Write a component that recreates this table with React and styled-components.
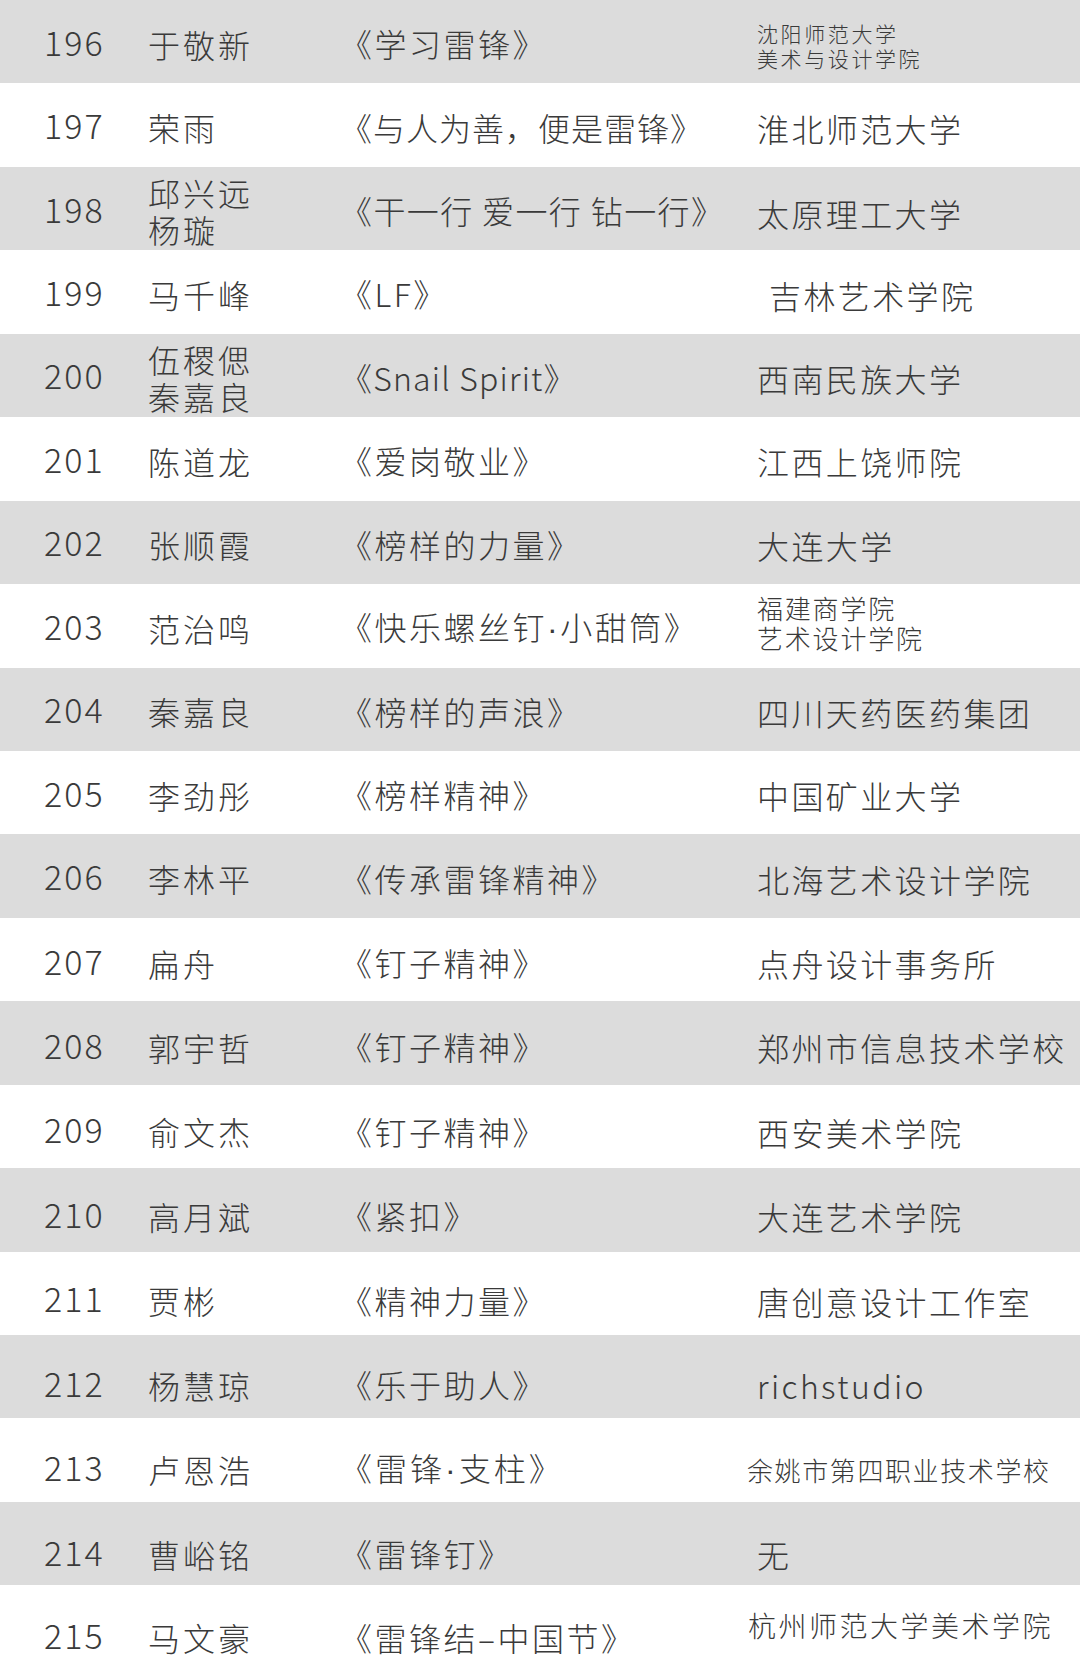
import React from "react";
import styled, { createGlobalStyle } from "styled-components";

const Global = createGlobalStyle`
  html, body { margin: 0; padding: 0; background: #ffffff; }
  body {
    font-family: "Noto Sans CJK SC", "Noto Sans", sans-serif;
    color: #3a3a3a;
    -webkit-font-smoothing: antialiased;
  }
`;

const Table = styled.div`
  display: flex;
  flex-direction: column;
  width: 1080px;
`;

const Row = styled.div`
  display: grid;
  grid-template-columns: 105px 193px 415px 1fr;
  align-items: center;
  box-sizing: border-box;
  height: ${(p) => p.$height}px;
  padding-left: 42px;
  padding-top: ${(p) => p.$shift * 2}px;
  background: ${(p) => (p.$shaded ? "#dcdcdc" : "#ffffff")};
`;

const Num = styled.div`
  font-family: "Noto Sans CJK SC", sans-serif;
  font-weight: 300;
  font-size: 34px;
  letter-spacing: 2px;
  line-height: 1;
  margin-left: 2px;
  white-space: nowrap;
`;

const Name = styled.div`
  font-weight: 300;
  font-size: 32px;
  letter-spacing: 3px;
  line-height: 37px;
  padding-top: 5px;
  margin-left: 1px;
  white-space: nowrap;
`;

const Title = styled.div`
  font-weight: 300;
  font-size: 32px;
  letter-spacing: ${(p) => p.$spacing}px;
  line-height: 1.1;
  padding-top: 4px;
  white-space: nowrap;
`;

const Dot = styled.span`
  font-family: "Liberation Sans", sans-serif;
`;

const Org = styled.div`
  font-weight: 300;
  font-size: ${(p) => p.$size}px;
  letter-spacing: ${(p) => p.$spacing}px;
  line-height: ${(p) => p.$lh}px;
  margin-left: ${(p) => 2 + p.$indent}px;
  padding-top: ${(p) => Math.max(0, 5 + p.$drop)}px;
  margin-bottom: ${(p) => p.$raise + Math.max(0, -(5 + p.$drop))}px;
  white-space: nowrap;
`;

const rows = [
  { n: "196", name: ["于敬新"], title: "《学习雷锋》", org: ["沈阳师范大学", "美术与设计学院"], size: 21, sp: 2.6, lh: 25, drop: 4 },
  { n: "197", name: ["荣雨"], title: "《与人为善，便是雷锋》", tsp: 1, org: ["淮北师范大学"] },
  { n: "198", name: ["邱兴远", "杨璇"], title: "《干一行 爱一行 钻一行》", tsp: 1.4, org: ["太原理工大学"], drop: 4 },
  { n: "199", name: ["马千峰"], title: "《LF》", org: ["吉林艺术学院"], indent: 12 },
  { n: "200", name: ["伍稷偲", "秦嘉良"], title: "《Snail Spirit》", tsp: 1.2, org: ["西南民族大学"] },
  { n: "201", name: ["陈道龙"], title: "《爱岗敬业》", org: ["江西上饶师院"] },
  { n: "202", name: ["张顺霞"], title: "《榜样的力量》", org: ["大连大学"] },
  { n: "203", name: ["范治鸣"], title: "《快乐螺丝钉·小甜筒》", org: ["福建商学院", "艺术设计学院"], size: 26, sp: 1.8, lh: 30, drop: -10 },
  { n: "204", name: ["秦嘉良"], title: "《榜样的声浪》", org: ["四川天药医药集团"] },
  { n: "205", name: ["李劲彤"], title: "《榜样精神》", org: ["中国矿业大学"] },
  { n: "206", name: ["李林平"], title: "《传承雷锋精神》", org: ["北海艺术设计学院"] },
  { n: "207", name: ["扁舟"], title: "《钉子精神》", org: ["点舟设计事务所"] },
  { n: "208", name: ["郭宇哲"], title: "《钉子精神》", org: ["郑州市信息技术学校"] },
  { n: "209", name: ["俞文杰"], title: "《钉子精神》", org: ["西安美术学院"] },
  { n: "210", name: ["高月斌"], title: "《紧扣》", org: ["大连艺术学院"] },
  { n: "211", name: ["贾彬"], title: "《精神力量》", org: ["唐创意设计工作室"] },
  { n: "212", name: ["杨慧琼"], title: "《乐于助人》", org: ["richstudio"] },
  { n: "213", name: ["卢恩浩"], title: "《雷锋·支柱》", tsp: 3, org: ["余姚市第四职业技术学校"], size: 26, sp: 1.6, indent: -10 },
  { n: "214", name: ["曹峪铭"], title: "《雷锋钉》", org: ["无"] },
  { n: "215", name: ["马文豪"], title: "《雷锋结–中国节》", org: ["杭州师范大学美术学院"], size: 28, sp: 2.5, indent: -9, raise: 26, last: true },
];

const ROW_H = 83.45;

function renderTitle(text) {
  const parts = text.split("·");
  return parts.map((part, k) => (
    <React.Fragment key={k}>
      {k > 0 && <Dot>·</Dot>}
      {part}
    </React.Fragment>
  ));
}

export default function App() {
  return (
    <>
      <Global />
      <Table>
        {rows.map((r, i) => {
          const shift = i > 10 ? (i - 10) * 1.0 : 0;
          return (
            <Row key={r.n} $shaded={i % 2 === 0} $height={r.last ? 100 : ROW_H} $shift={r.last ? 0 : shift}>
              <Num>{r.n}</Num>
              <Name>
                {r.name.map((l) => (
                  <div key={l}>{l}</div>
                ))}
              </Name>
              <Title $spacing={r.tsp ?? 2.5}>{renderTitle(r.title)}</Title>
              <Org
                $size={r.size || 32}
                $spacing={r.sp ?? 2.4}
                $lh={r.lh || 38}
                $indent={r.indent || 0}
                $drop={r.drop || 0}
                $raise={r.raise || 0}
              >
                {r.org.map((l) => (
                  <div key={l}>{l}</div>
                ))}
              </Org>
            </Row>
          );
        })}
      </Table>
    </>
  );
}
